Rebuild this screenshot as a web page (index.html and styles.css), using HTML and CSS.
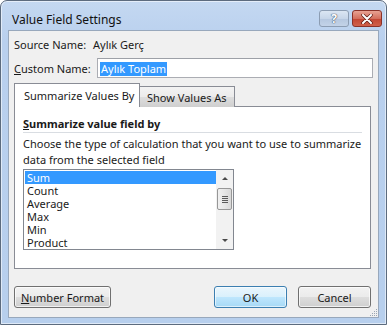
FILE: index.html
```html
<!DOCTYPE html>
<html lang="tr">
<head>
    <meta charset="UTF-8">
    <title>Value Field Settings</title>
    <link rel="stylesheet" href="styles.css">
</head>
<body>
    <div class="window">
        <div class="titlebar">
            <span class="title">Value Field Settings</span>
            <div class="caption-btns">
                <span class="cap-btn help">?</span>
                <span class="cap-btn close">
                    <svg width="12" height="10" viewBox="0 0 12 10">
                        <path d="M2 1 L10 9 M10 1 L2 9" stroke="#5a1a14" stroke-width="3.4" stroke-linecap="round"/>
                        <path d="M2 1 L10 9 M10 1 L2 9" stroke="#ffffff" stroke-width="2" stroke-linecap="round"/>
                    </svg>
                </span>
            </div>
        </div>
        <div class="client">
            <div class="row source">
                <span class="src-label">Source Name:</span>
                <span class="src-value">Aylık Gerç</span>
            </div>
            <div class="row custom">
                <label class="cust-label"><u>C</u>ustom Name:</label>
                <div class="textbox"><span class="selected">Aylık Toplam</span></div>
            </div>

            <div class="tabs">
                <div class="tab active">Summarize Values By</div>
                <div class="tab">Show Values As</div>
            </div>
            <div class="panel">
                <div class="group-title"><u>S</u>ummarize value field by</div>
                <div class="desc">Choose the type of calculation that you want to use to summarize<br>data from the selected field</div>
                <div class="listbox">
                    <ul class="items">
                        <li class="item current">Sum</li>
                        <li class="item">Count</li>
                        <li class="item">Average</li>
                        <li class="item">Max</li>
                        <li class="item">Min</li>
                        <li class="item">Product</li>
                    </ul>
                    <div class="scrollbar">
                        <div class="arrow"><span class="tri up"></span></div>
                        <div class="track">
                            <div class="thumb"><span></span><span></span><span></span><span></span></div>
                        </div>
                        <div class="arrow"><span class="tri down"></span></div>
                    </div>
                </div>
            </div>

            <div class="footer">
                <button class="btn wide"><u>N</u>umber Format</button>
                <button class="btn default">OK</button>
                <button class="btn">Cancel</button>
            </div>

            <svg class="grip" width="9" height="9" viewBox="0 0 9 9">
                <g fill="#9aa6b4">
                    <rect x="7" y="1" width="1" height="1"/>
                    <rect x="5" y="3" width="1" height="1"/><rect x="7" y="3" width="1" height="1"/>
                    <rect x="3" y="5" width="1" height="1"/><rect x="5" y="5" width="1" height="1"/><rect x="7" y="5" width="1" height="1"/>
                    <rect x="1" y="7" width="1" height="1"/><rect x="3" y="7" width="1" height="1"/><rect x="5" y="7" width="1" height="1"/><rect x="7" y="7" width="1" height="1"/>
                </g>
            </svg>
        </div>
    </div>
</body>
</html>
```

FILE: styles.css
```css
* {
    margin: 0;
    padding: 0;
    box-sizing: border-box;
}

body {
    font-family: 'Noto Sans', 'DejaVu Sans', sans-serif;
    font-size: 11px;
    color: #1a1a1a;
    background: #ffffff;
}

.window {
    width: 387px;
    height: 325px;
    border: 1px solid #5c6b7e;
    border-radius: 7px 7px 0 0;
    background: linear-gradient(#c4d8f1, #b9d0ee 40px, #b7cfed);
    box-shadow: inset 0 0 0 1px rgba(255, 255, 255, 0.55);
    padding: 0 7px 6px 7px;
    display: flex;
    flex-direction: column;
}

.titlebar {
    height: 29px;
    display: flex;
    justify-content: space-between;
    align-items: flex-start;
}

.title {
    padding: 11px 0 0 4px;
    font-size: 12px;
    line-height: 15px;
    color: #111;
}

.caption-btns {
    display: flex;
    gap: 3px;
    margin: 9px -3px 0 0;
}

.cap-btn {
    width: 30px;
    height: 17px;
    border-radius: 3px;
    display: flex;
    align-items: center;
    justify-content: center;
}

.help {
    border: 1px solid #8c9db3;
    background: linear-gradient(#dbe6f3, #c7d6e9 50%, #b5c7df 51%, #c3d3e8);
    color: #ffffff;
    font-weight: bold;
    font-size: 12px;
    text-shadow: 0 0 1px #4c5b70, 0 0 1px #4c5b70, 0 0 1px #4c5b70;
}

.close {
    border: 1px solid #8a3229;
    background: linear-gradient(#e8a293, #d46f5d 50%, #c24532 51%, #d0614b);
}

.client {
    flex: 1;
    position: relative;
    background: #f0f0f0;
    border: 1px solid #98a8bc;
    padding: 6px 7px 0 5px;
}

.row {
    display: flex;
    align-items: center;
}

.source {
    height: 15px;
}

.src-label {
    width: 79px;
}

.custom {
    height: 20px;
    margin: 6px -2px 0 0;
}

.cust-label {
    width: 83px;
}

.textbox {
    flex: 1;
    height: 20px;
    background: #ffffff;
    border: 1px solid #abadb3;
    border-top-color: #9da0a7;
    padding: 2px 0 0 2px;
}

.selected {
    display: inline-block;
    height: 14px;
    line-height: 14px;
    padding: 0 1px;
    background: #3399ff;
    color: #ffffff;
}

.tabs {
    display: flex;
    align-items: flex-end;
    height: 23px;
    margin-top: 6px;
    position: relative;
    z-index: 1;
    margin-bottom: -1px;
}

.tab {
    height: 21px;
    padding: 3px 0 0 7px;
    width: 95px;
    border: 1px solid #898c95;
    border-left: none;
    border-bottom: none;
    background: linear-gradient(#f3f3f3, #ebebeb 50%, #dddddd 51%, #cfcfcf);
    line-height: 15px;
}

.tab.active {
    width: 126px;
    height: 24px;
    padding: 4px 0 0 9px;
    border-left: 1px solid #898c95;
    background: #ffffff;
}

.panel {
    height: 163px;
    background: #ffffff;
    border: 1px solid #898c95;
    padding: 9px 8px 0 8px;
}

.group-title {
    font-weight: bold;
    line-height: 15px;
    padding-bottom: 1px;
    border-bottom: 1px solid #d9dde2;
}

.desc {
    margin-top: 3px;
    line-height: 16px;
}

.listbox {
    width: 211px;
    height: 81px;
    margin-top: 1px;
    border: 1px solid #828790;
    display: flex;
    background: #ffffff;
}

.items {
    list-style: none;
    flex: 1;
    padding: 1px 0 0 1px;
}

.item {
    height: 13px;
    line-height: 13px;
    padding-left: 2px;
}

.item.current {
    background: #3399ff;
    color: #ffffff;
}

.scrollbar {
    width: 17px;
    display: flex;
    flex-direction: column;
    background: #f2f2f2;
}

.arrow {
    height: 17px;
    display: flex;
    align-items: center;
    justify-content: center;
}

.tri {
    width: 0;
    height: 0;
    border-left: 3px solid transparent;
    border-right: 3px solid transparent;
}

.tri.up {
    border-bottom: 3px solid #4a4a4a;
}

.tri.down {
    border-top: 3px solid #4a4a4a;
}

.track {
    flex: 1;
    padding: 1px 0 0 1px;
}

.thumb {
    width: 15px;
    height: 22px;
    border: 1px solid #979797;
    border-radius: 2px;
    background: linear-gradient(90deg, #f1f1f1, #e6e6e6 50%, #d8d8d8);
    display: flex;
    flex-direction: column;
    align-items: center;
    justify-content: center;
    gap: 1px;
}

.thumb span {
    width: 6px;
    height: 1px;
    background: #5a5a5a;
}

.footer {
    display: flex;
    margin-top: 17px;
    gap: 11px;
}

.btn {
    height: 22px;
    width: 73px;
    font-family: inherit;
    font-size: 11px;
    color: #1a1a1a;
    border: 1px solid #707070;
    border-radius: 3px;
    background: linear-gradient(#f2f2f2, #ebebeb 50%, #dddddd 51%, #cfcfcf);
    box-shadow: inset 0 0 0 1px rgba(255, 255, 255, 0.7);
}

.btn.wide {
    width: 97px;
    margin-right: auto;
}

.btn.default {
    border-color: #3c7fb1;
    background: linear-gradient(#eaf6fd, #d9f0fc 50%, #bee6fd 51%, #a7d9f5);
    box-shadow: inset 0 0 0 1px rgba(255, 255, 255, 0.6);
}

.grip {
    position: absolute;
    right: 0;
    bottom: 0;
}
```
